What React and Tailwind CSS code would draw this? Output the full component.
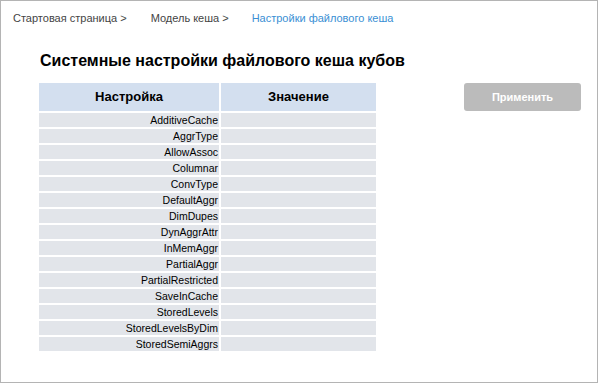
import React from 'react';

const settings = [
    'AdditiveCache',
    'AggrType',
    'AllowAssoc',
    'Columnar',
    'ConvType',
    'DefaultAggr',
    'DimDupes',
    'DynAggrAttr',
    'InMemAggr',
    'PartialAggr',
    'PartialRestricted',
    'SaveInCache',
    'StoredLevels',
    'StoredLevelsByDim',
    'StoredSemiAggrs',
];

const App = () => {
    return (
        <div className="w-[598px] h-[383px] bg-white border border-[#b4b4b4] font-['Liberation_Sans',Arial,sans-serif] text-black">
            {/* breadcrumbs */}
            <div className="flex items-center pt-[10px] pl-[12px] text-[11px] leading-[14px] text-[#444]">
                <span>Стартовая страница &gt;</span>
                <span className="ml-[24px]">Модель кеша &gt;</span>
                <span className="ml-[23px] text-[#3a8fd4]">Настройки файлового кеша</span>
            </div>

            <h1 className="mt-[26px] ml-[39px] text-[16px] leading-[20px] font-bold">
                Системные настройки файлового кеша кубов
            </h1>

            <div className="flex mt-[12px] ml-[38px]">
                <div className="grid grid-cols-[180px_155px] grid-rows-[28px] auto-rows-[14px] gap-[2px]">
                    <div className="bg-[#d3dfef] flex items-center justify-center text-[13px] font-bold">
                        Настройка
                    </div>
                    <div className="bg-[#d3dfef] flex items-center justify-center text-[13px] font-bold">
                        Значение
                    </div>
                    {settings.map((name) => (
                        <React.Fragment key={name}>
                            <div className="bg-[#e2e5ea] text-right pr-[1px] text-[10.5px] leading-[14px]">
                                {name}
                            </div>
                            <div className="bg-[#e2e5ea]"></div>
                        </React.Fragment>
                    ))}
                </div>

                <button className="ml-[88px] w-[117px] h-[28px] rounded-[3px] bg-[#bbbbbb] text-white text-[11px] font-bold">
                    Применить
                </button>
            </div>
        </div>
    );
};

export default App;
